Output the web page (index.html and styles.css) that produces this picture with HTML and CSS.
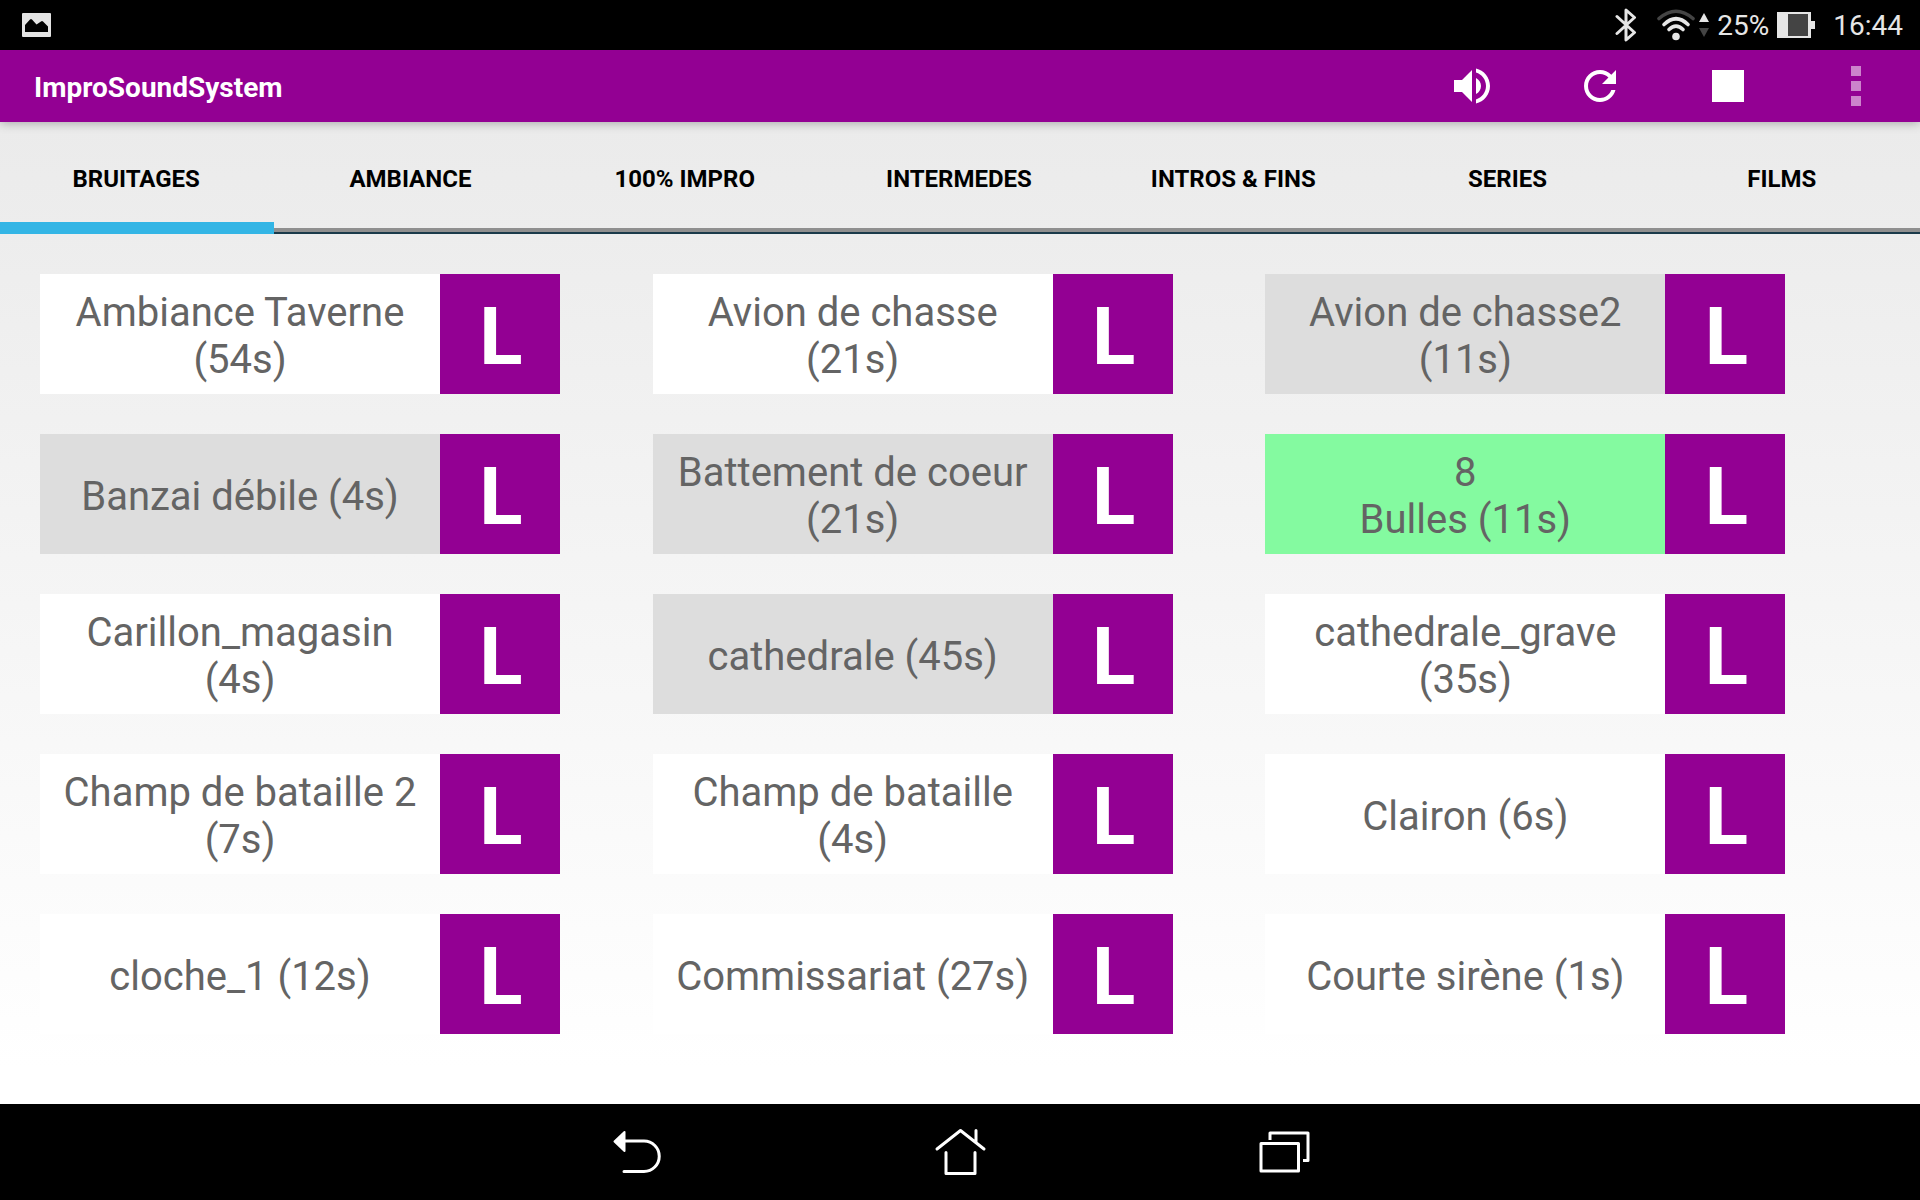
FILE: index.html
```html
<!DOCTYPE html>
<html lang="fr">
<head>
<meta charset="utf-8">
<meta name="viewport" content="width=device-width, initial-scale=1">
<title>ImproSoundSystem</title>
<link rel="stylesheet" href="styles.css">
</head>
<body>
<div class="status">
  <svg class="status-photo" width="29" height="24" viewBox="0 0 29 24" aria-hidden="true"><rect width="29" height="24" rx="1" fill="#e4e4e4"/><path d="M3 19V12L8 6.500Q9 5.500 10 6.500L14.500 11.500L19 8.500Q20 7.500 21 8.500L26 13.500V19z" fill="#000"/></svg>
  <div class="status-icons">
    <svg width="22" height="34" viewBox="0 0 22 34" fill="none" stroke="#e6e6e6" stroke-width="3" stroke-linecap="round" stroke-linejoin="round" aria-hidden="true"><path d="M2 8.500L19.500 24.500L11 32V2L19.500 9.500L2 25.500"/></svg>
    <svg width="38" height="32" viewBox="0 0 38 32" fill="none" stroke-width="3.600" stroke-linecap="round" aria-hidden="true"><path d="M2 9.500Q19-5 36 9.500" stroke="#444"/><path d="M7 15.500Q19 4 31 15.500M12 20.500Q19 13.500 26 20.500" stroke="#e6e6e6"/><circle cx="19" cy="27.500" r="3.800" fill="#e6e6e6"/></svg>
    <svg width="10" height="26" viewBox="0 0 10 26" aria-hidden="true"><path d="M0 10L5 1L10 10z" fill="#e6e6e6"/><path d="M0 16L5 25L10 16z" fill="#444"/></svg>
    <span class="status-text">25%</span>
    <svg width="38" height="26" viewBox="0 0 38 26" aria-hidden="true"><path d="M0 0H34V9H38V17H34V26H0z" fill="#e6e6e6"/><rect x="11" y="2" width="20" height="22" fill="#444"/></svg>
  </div>
  <time class="status-text clock">16:44</time>
</div>

<header class="appbar">
  <h1 class="title">ImproSoundSystem</h1>
  <div class="actions">
    <button class="action" type="button" aria-label="Volume"><svg width="48" height="48" viewBox="0 0 24 24" fill="#fff"><path d="M3 9v6h4l5 5V4L7 9H3zm13.500 3c0-1.770-1.020-3.290-2.500-4.030v8.050c1.480-.73 2.500-2.250 2.500-4.020zM14 3.230v2.060c2.890.86 5 3.540 5 6.710s-2.110 5.850-5 6.710v2.060c4.010-.91 7-4.490 7-8.770s-2.990-7.860-7-8.770z"/></svg></button>
    <button class="action" type="button" aria-label="Recharger"><svg width="48" height="48" viewBox="0 0 24 24" fill="#fff"><path d="M17.650 6.350C16.200 4.900 14.210 4 12 4c-4.420 0-7.990 3.580-7.990 8s3.570 8 7.990 8c3.730 0 6.840-2.550 7.730-6h-2.080c-.82 2.330-3.040 4-5.650 4-3.310 0-6-2.690-6-6s2.690-6 6-6c1.660 0 3.140.69 4.220 1.780L13 11h7V4l-2.350 2.350z"/></svg></button>
    <button class="action" type="button" aria-label="Stop"><svg width="48" height="48" viewBox="0 0 24 24" fill="#fff"><path d="M4 4h16v16H4z"/></svg></button>
    <button class="action" type="button" aria-label="Menu"><svg width="10" height="40" viewBox="0 0 10 40" fill="#cc83cc"><path d="M0 0h10v10H0zM0 15h10v10H0zM0 30h10v10H0z"/></svg></button>
  </div>
</header>

<nav class="tabs">
  <a class="tab tab-active" href="#bruitages" aria-current="page">BRUITAGES</a>
  <a class="tab" href="#ambiance">AMBIANCE</a>
  <a class="tab" href="#impro">100% IMPRO</a>
  <a class="tab" href="#intermedes">INTERMEDES</a>
  <a class="tab" href="#intros">INTROS &amp; FINS</a>
  <a class="tab" href="#series">SERIES</a>
  <a class="tab" href="#films">FILMS</a>
</nav>

<main class="sounds">
  <div class="sound"><button class="play" type="button">Ambiance Taverne (54s)</button><button class="loop" type="button">L</button></div>
  <div class="sound"><button class="play" type="button">Avion de chasse (21s)</button><button class="loop" type="button">L</button></div>
  <div class="sound"><button class="play played" type="button">Avion de chasse2 (11s)</button><button class="loop" type="button">L</button></div>
  <div class="sound"><button class="play played" type="button">Banzai débile (4s)</button><button class="loop" type="button">L</button></div>
  <div class="sound"><button class="play played" type="button">Battement de coeur (21s)</button><button class="loop" type="button">L</button></div>
  <div class="sound"><button class="play playing" type="button">8<br>Bulles (11s)</button><button class="loop" type="button">L</button></div>
  <div class="sound"><button class="play" type="button">Carillon_magasin (4s)</button><button class="loop" type="button">L</button></div>
  <div class="sound"><button class="play played" type="button">cathedrale (45s)</button><button class="loop" type="button">L</button></div>
  <div class="sound"><button class="play" type="button">cathedrale_grave (35s)</button><button class="loop" type="button">L</button></div>
  <div class="sound"><button class="play" type="button">Champ de bataille 2 (7s)</button><button class="loop" type="button">L</button></div>
  <div class="sound"><button class="play" type="button">Champ de bataille (4s)</button><button class="loop" type="button">L</button></div>
  <div class="sound"><button class="play" type="button">Clairon (6s)</button><button class="loop" type="button">L</button></div>
  <div class="sound"><button class="play" type="button">cloche_1 (12s)</button><button class="loop" type="button">L</button></div>
  <div class="sound"><button class="play" type="button">Commissariat (27s)</button><button class="loop" type="button">L</button></div>
  <div class="sound"><button class="play" type="button">Courte sirène (1s)</button><button class="loop" type="button">L</button></div>
</main>

<footer class="navbar">
  <button class="navkey" type="button" aria-label="Retour"><svg width="100" height="96" viewBox="0 4 100 96" fill="none" stroke="#fff" stroke-width="3" stroke-linecap="round" stroke-linejoin="round"><path d="M34 41H54A15 15 0 0 1 54 71.500H34"/><path d="M34.500 32V51L24.500 41.500z" fill="#fff" stroke-width="2"/></svg></button>
  <button class="navkey" type="button" aria-label="Accueil"><svg width="100" height="96" viewBox="0 4 100 96" fill="none" stroke="#fff" stroke-width="3" stroke-linecap="round" stroke-linejoin="round"><path d="M27 49L50.500 30.500L74 49M66 42V30.500M36 52.500V73.500H65V52.500"/></svg></button>
  <button class="navkey" type="button" aria-label="Applications"><svg width="100" height="96" viewBox="-5 4 100 96" fill="none" stroke="#fff" stroke-width="3" stroke-linejoin="round"><path d="M26 43.500H63.500V71H26zM35 40V33H73V60.500H68"/></svg></button>
</footer>
</body>
</html>
```
FILE: styles.css
```css
* { box-sizing: border-box; }

body {
  margin: 0;
  min-height: 100vh;
  display: flex;
  flex-direction: column;
  font-family: Roboto, "Liberation Sans", sans-serif;
  background: linear-gradient(#e8e8e8, #fff 89%);
}

button {
  margin: 0;
  padding: 0;
  border: 0;
  background: none;
  font: inherit;
  cursor: pointer;
}

svg { display: block; }

.status {
  height: 50px;
  padding: 0 17px 0 22px;
  display: flex;
  align-items: center;
  background: #000;
  color: #e6e6e6;
  font-size: 28px;
  line-height: 36px;
}

.status-icons {
  margin-left: auto;
  display: flex;
  align-items: center;
  gap: 8px;
}

.status-icons svg:first-child { margin-right: 12px; }
.status-icons svg:nth-child(2) { margin-right: -4px; }
.status-text { padding-top: 2px; }
.clock { margin-left: 18px; }

.appbar {
  height: 72px;
  padding-left: 34px;
  display: flex;
  align-items: center;
  justify-content: space-between;
  background: #930093;
  box-shadow: 0 1px 10px rgba(0, 0, 0, 0.3);
  z-index: 1;
}

.title {
  margin: 0;
  padding-top: 4px;
  color: #fff;
  font-size: 28px;
  line-height: 36px;
  font-weight: 700;
}

.actions { display: flex; align-self: stretch; }

.action {
  width: 128px;
  display: flex;
  align-items: center;
  justify-content: center;
}

.tabs {
  height: 112px;
  display: flex;
  background: linear-gradient(#ebebeb, #ededed);
}

.tab {
  flex: 1 1 0;
  padding: 2px 2px 0 0;
  display: flex;
  align-items: center;
  justify-content: center;
  color: #000;
  font-size: 24px;
  line-height: 28px;
  font-weight: 700;
  text-decoration: none;
  white-space: nowrap;
  box-shadow: inset 0 -2px #1a3a4a, inset 0 -6px #8f8f8f;
}

.tab-active { box-shadow: inset 0 -12px #33b5e5; }

.sounds {
  flex: 1;
  padding: 40px 42px 40px 40px;
  display: grid;
  grid-template-columns: repeat(3, 1fr);
  align-content: start;
  row-gap: 40px;
}

.sound {
  width: 520px;
  max-width: 100%;
  min-height: 120px;
  display: flex;
}

.play {
  flex: 1;
  padding: 4px 16px 0;
  background: #fff;
  color: #646464;
  font-size: 40px;
  line-height: 47px;
}

.played { background: #ddd; }
.playing { background: #84faa0; }

.loop {
  width: 120px;
  padding: 6px 0 0 2px;
  background: #930093;
  color: #fff;
  font-size: 80px;
  line-height: 94px;
  font-weight: 700;
}

.navbar {
  height: 96px;
  display: flex;
  justify-content: center;
  gap: 220px;
  background: #000;
}
```
